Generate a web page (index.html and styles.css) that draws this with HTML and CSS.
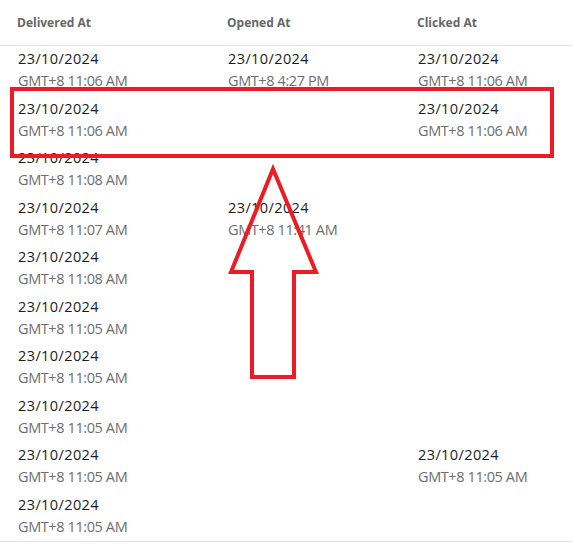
FILE: index.html
```html
<!DOCTYPE html>
<html lang="en">
<head>
    <meta charset="UTF-8">
    <title>Email Activity</title>
    <link rel="stylesheet" href="styles.css">
</head>
<body>
    <div class="table">
        <div class="row head">
            <div class="cell">Delivered At</div>
            <div class="cell">Opened At</div>
            <div class="cell">Clicked At</div>
        </div>

        <div class="row">
            <div class="cell"><div class="date">23/10/2024</div><div class="time">GMT+8 11:06 AM</div></div>
            <div class="cell"><div class="date">23/10/2024</div><div class="time">GMT+8 4:27 PM</div></div>
            <div class="cell"><div class="date">23/10/2024</div><div class="time">GMT+8 11:06 AM</div></div>
        </div>
        <div class="row">
            <div class="cell"><div class="date">23/10/2024</div><div class="time">GMT+8 11:06 AM</div></div>
            <div class="cell"></div>
            <div class="cell"><div class="date">23/10/2024</div><div class="time">GMT+8 11:06 AM</div></div>
        </div>
        <div class="row">
            <div class="cell"><div class="date">23/10/2024</div><div class="time">GMT+8 11:08 AM</div></div>
            <div class="cell"></div>
            <div class="cell"></div>
        </div>
        <div class="row">
            <div class="cell"><div class="date">23/10/2024</div><div class="time">GMT+8 11:07 AM</div></div>
            <div class="cell"><div class="date">23/10/2024</div><div class="time">GMT+8 11:41 AM</div></div>
            <div class="cell"></div>
        </div>
        <div class="row">
            <div class="cell"><div class="date">23/10/2024</div><div class="time">GMT+8 11:08 AM</div></div>
            <div class="cell"></div>
            <div class="cell"></div>
        </div>
        <div class="row">
            <div class="cell"><div class="date">23/10/2024</div><div class="time">GMT+8 11:05 AM</div></div>
            <div class="cell"></div>
            <div class="cell"></div>
        </div>
        <div class="row">
            <div class="cell"><div class="date">23/10/2024</div><div class="time">GMT+8 11:05 AM</div></div>
            <div class="cell"></div>
            <div class="cell"></div>
        </div>
        <div class="row">
            <div class="cell"><div class="date">23/10/2024</div><div class="time">GMT+8 11:05 AM</div></div>
            <div class="cell"></div>
            <div class="cell"></div>
        </div>
        <div class="row">
            <div class="cell"><div class="date">23/10/2024</div><div class="time">GMT+8 11:05 AM</div></div>
            <div class="cell"></div>
            <div class="cell"><div class="date">23/10/2024</div><div class="time">GMT+8 11:05 AM</div></div>
        </div>
        <div class="row last">
            <div class="cell"><div class="date">23/10/2024</div><div class="time">GMT+8 11:05 AM</div></div>
            <div class="cell"></div>
            <div class="cell"></div>
        </div>
    </div>

    <!-- annotation drawn over the table -->
    <svg class="markup" width="573" height="548" viewBox="0 0 573 548">
        <rect x="12" y="89" width="540" height="67" fill="none" stroke="#ed1c24" stroke-width="4"/>
        <polygon points="273,169 231,272 252,272 252,377 294,377 294,272 316,272" fill="none" stroke="#ed1c24" stroke-width="4" stroke-linejoin="miter"/>
    </svg>
</body>
</html>
```

FILE: styles.css
```css
body {
    margin: 0;
    background: #fff;
    font-family: "Open Sans", sans-serif;
    position: relative;
}
.table {
    width: 573px;
    border-bottom: 1px solid #e2e2e2;
}
.row {
    display: grid;
    grid-template-columns: 210px 190px 1fr;
    padding: 2px 0 0 18px;
    height: 47.5px;
}
.row.head {
    height: 45px;
    padding: 0 0 0 17px;
    align-items: center;
    border-bottom: 1px solid #e2e2e2;
}
.head .cell {
    font-size: 12px;
    font-weight: 700;
    color: #666;
}
.date {
    font-size: 14.5px;
    line-height: 22px;
    letter-spacing: 0.4px;
    color: #1c1c1c;
}
.time {
    font-size: 14.5px;
    line-height: 22px;
    letter-spacing: -0.4px;
    color: #6e6e6e;
}
.markup {
    position: absolute;
    left: 0;
    top: 0;
}
```
